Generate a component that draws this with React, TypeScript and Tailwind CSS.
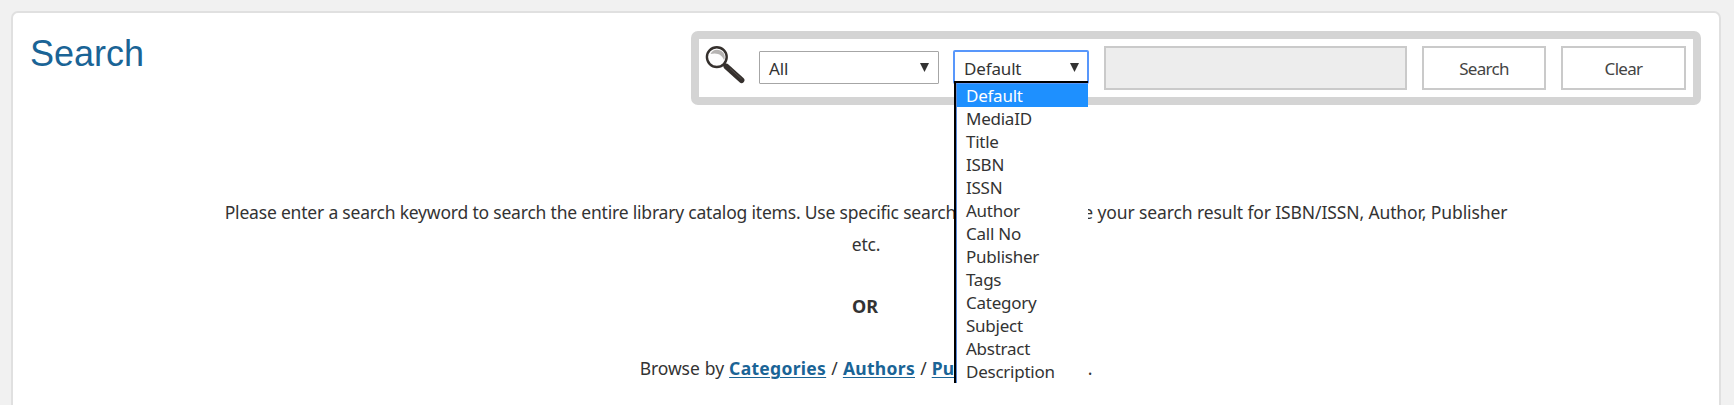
const fields = [
  'Default', 'MediaID', 'Title', 'ISBN', 'ISSN', 'Author', 'Call No',
  'Publisher', 'Tags', 'Category', 'Subject', 'Abstract', 'Description',
];

function Magnifier() {
  return (
    <svg className="mt-[6px] ml-[6px] h-[40px] w-[41px] shrink-0" viewBox="0 0 41 40" fill="none">
      <path d="M18.5 19 L23 23" stroke="#35302d" strokeWidth="3.5" />
      <path d="M21.5 21.6 L36.5 35.2" stroke="#35302d" strokeWidth="5.8" strokeLinecap="round" />
      <circle cx="11.8" cy="12.1" r="9.9" fill="#fdfdfd" stroke="#35302d" strokeWidth="2.4" />
      <path d="M5.5 9 C7.5 4 14.5 3 18.5 8 C19.8 10 20.3 12.5 19.2 15.5 C17.5 10 12.5 7 5.5 9Z" fill="#b5b3b2" />
      <path d="M25 23.5 L36.5 33.8" stroke="#5c5653" strokeWidth="0.8" />
    </svg>
  );
}

function Arrow() {
  return (
    <svg className="h-[9px] w-[9px]" viewBox="0 0 9 9">
      <path d="M0 0H9L4.5 9Z" fill="#333" />
    </svg>
  );
}

function SearchBar() {
  return (
    <div className="flex h-[74px] w-[1010px] rounded-[7px] bg-[#d4d4d4] p-2 leading-[23px]">
      <div className="flex flex-1 items-start bg-white">
        <Magnifier />
        <div className="mt-3 ml-[13px] flex h-[33px] w-[180px] items-center justify-between rounded-[1px] border border-[#a6a6a6] pr-[9px] pl-[9px]">
          <span className="pt-[2px] tracking-[-0.1px]">All</span>
          <Arrow />
        </div>
        <div className="relative mt-[11px] ml-[14px] h-[34px] w-[136px] shrink-0">
          <div className="flex h-full items-center justify-between rounded-[2px] border-2 border-[#5897fb] pr-[8px] pl-[9px]">
            <span className="pt-[3px] tracking-[-0.15px]">Default</span>
            <Arrow />
          </div>
          <ul className="absolute top-[31px] left-px z-10 w-[134px] border-t-2 border-l-2 border-black bg-white">
            <li className="border-t border-l border-t-[#5897fb] border-l-[#5b8bd8]">
              <ul className="tracking-[-0.25px]">
                {fields.map((f, i) => (
                  <li key={f} className={i === 0 ? 'h-[23px] bg-[#1e90ff] pl-[9px] text-white' : 'h-[23px] pl-[9px]'}>
                    {f}
                  </li>
                ))}
              </ul>
            </li>
          </ul>
        </div>
        <div className="mt-[7px] ml-[15px] h-[44px] w-[303px] border-2 border-[#cacaca] bg-[#ededed]" />
        <button className="mt-[7px] ml-[15px] h-[44px] w-[124px] border-2 border-[#cacaca] bg-white pt-px text-[17px] tracking-[-0.7px] text-[#444]">Search</button>
        <button className="mt-[7px] ml-[15px] h-[44px] w-[125px] border-2 border-[#cacaca] bg-white pt-px text-[17px] tracking-[-0.7px] text-[#444]">Clear</button>
      </div>
    </div>
  );
}

function BrowseLink({ children }: { children: string }) {
  return <a href="#" className="font-bold tracking-[0.3px] text-[#1a6496] underline decoration-1 underline-offset-2">{children}</a>;
}

export default function App() {
  return (
    <div className="h-[405px] overflow-hidden bg-[#f1f1f1] pt-[11px] pr-[13px] pl-[11px] font-['Noto_Sans',sans-serif] text-[17px] text-[#333]">
      <div className="h-[500px] rounded-[7px] border-2 border-[#e0e0e0] bg-white">
        <div className="flex items-start justify-between pt-[18px] pr-[18px] pl-[17px]">
          <h1 className="pt-[2px] font-['Liberation_Sans',sans-serif] text-[36px] leading-[41px] text-[#1a6496]">Search</h1>
          <SearchBar />
        </div>
        <div className="pt-[91px] text-center text-[17.5px] leading-[32px] whitespace-nowrap">
          <p className="tracking-[-0.2px]">
            Please enter a search keyword to search the entire library catalog items. Use specific search options to refin
            <span className="tracking-[-0.12px]">e your search result for ISBN/ISSN, Author, Publisher</span>
            <br />
            etc.
          </p>
          <p className="pt-[30px] pr-[2px] text-[18px] font-bold">OR</p>
          <p className="pt-[30px] tracking-[-0.1px] [word-spacing:0.7px]">
            Browse by <BrowseLink>Categories</BrowseLink> / <BrowseLink>Authors</BrowseLink> / <BrowseLink>Publishers</BrowseLink>
            <span className="mx-[2.5px]"> / </span>
            <BrowseLink>Tags</BrowseLink>.
          </p>
        </div>
      </div>
    </div>
  );
}
